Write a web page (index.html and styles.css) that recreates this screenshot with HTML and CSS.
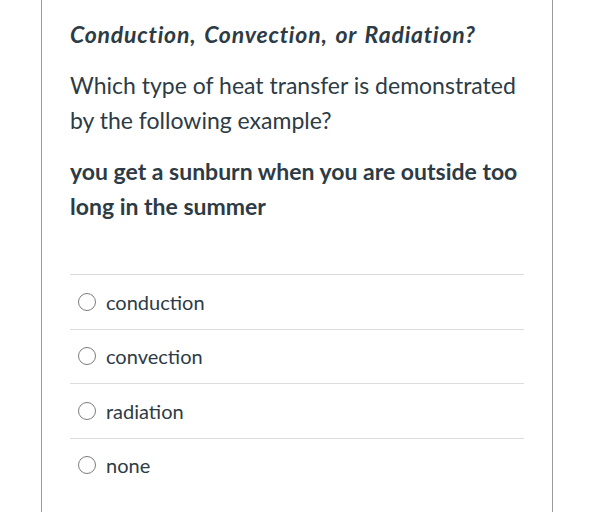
FILE: index.html
```html
<!DOCTYPE html>
<html>
<head>
<meta charset="utf-8">
<link rel="stylesheet" href="styles.css">
</head>
<body>
<div class="card">
  <h2 class="title">Conduction, Convection, or Radiation?</h2>
  <p class="question">Which type of heat transfer is demonstrated by the following example?</p>
  <p class="example">you get a sunburn when you are outside too long in the summer</p>
  <div class="answers">
    <label class="answer"><span class="radio"></span><span class="label">conduction</span></label>
    <label class="answer"><span class="radio"></span><span class="label">convection</span></label>
    <label class="answer"><span class="radio"></span><span class="label">radiation</span></label>
    <label class="answer"><span class="radio"></span><span class="label">none</span></label>
  </div>
</div>
</body>
</html>
```
FILE: styles.css
```css
html, body {
  margin: 0;
  padding: 0;
  background: #ffffff;
}
body {
  font-family: Lato, "Liberation Sans", sans-serif;
  color: #2d3b45;
  height: 512px;
  overflow: hidden;
}
.card {
  margin-left: 41px;
  width: 512px;
  height: 512px;
  border-left: 1.5px solid #9a9a9a;
  border-right: 1.5px solid #9a9a9a;
  padding: 17px 28px 0 28px;
  box-sizing: border-box;
  overflow: hidden;
}
.title {
  margin: 0;
  font-size: 23px;
  font-weight: 700;
  font-style: italic;
  line-height: 35px;
  letter-spacing: 0.8px;
  word-spacing: 2px;
  white-space: nowrap;
}
.question {
  margin: 16px 0 0 0;
  font-size: 23px;
  line-height: 35px;
}
.example {
  margin: 16px 0 0 0;
  font-size: 23px;
  font-weight: 700;
  line-height: 35px;
}
.answers {
  margin-top: 50px;
  display: flex;
  flex-direction: column;
}
.answer {
  display: flex;
  align-items: center;
  height: 54.5px;
  border-top: 1px solid #dcdcdc;
  box-sizing: border-box;
  padding-left: 8px;
  gap: 10px;
}
.radio {
  width: 18px;
  height: 18px;
  border: 1.5px solid #7d7d7d;
  border-radius: 50%;
  box-sizing: border-box;
  flex: none;
}
.label {
  font-size: 20px;
  line-height: 24px;
}
```
